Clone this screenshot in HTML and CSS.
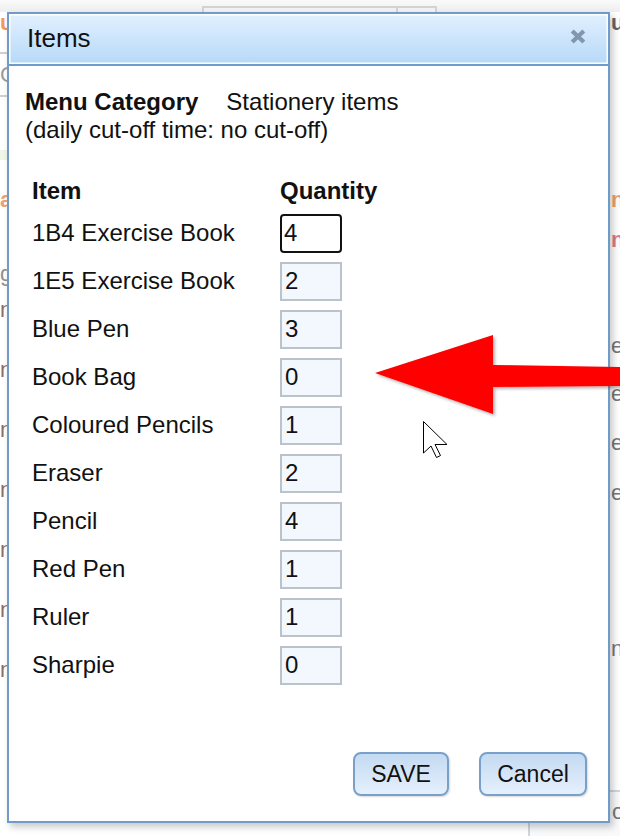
FILE: index.html
```html
<!DOCTYPE html>
<html>
<head>
<meta charset="utf-8">
<link rel="stylesheet" href="styles.css">
</head>
<body>
<div class="page">
  <div class="bg-top"><div class="bg-topbox"><div class="bg-topdiv"></div></div></div>
  <div class="bg">
    <div class="bg-left">
      <div class="f f-u">u</div>
      <div class="f-box">C</div>
      <div class="f-green"></div>
      <div class="f f-a">a</div>
      <div class="f f-g">g</div>
      <div class="f f-n first">n</div>
      <div class="f f-n">n</div>
      <div class="f f-n">n</div>
      <div class="f f-n">n</div>
      <div class="f f-n">n</div>
      <div class="f f-n">n</div>
      <div class="f f-n">n</div>
    </div>
    <div class="bg-right">
      <div class="f r-u">u</div>
      <div class="f r-on">n</div>
      <div class="f r-pn">n</div>
      <div class="f r-e1">e</div>
      <div class="f r-e2">e</div>
      <div class="f r-er">er</div>
      <div class="f r-ec">ec</div>
      <div class="f r-n">n</div>
      <div class="r-box">o</div>
    </div>
  </div>

  <div class="dialog">
    <div class="titlebar">
      <span class="title">Items</span>
      <svg class="close" width="16" height="15" viewBox="0 0 16 15"><path d="M2.2 2 L13.8 13 M13.8 2 L2.2 13" stroke="#8297ac" stroke-width="4.2" stroke-linecap="butt"/></svg>
    </div>
    <div class="content">
      <div class="info"><b>Menu Category</b><span class="cat">Stationery items</span></div>
      <div class="info">(daily cut-off time: no cut-off)</div>
      <div class="table">
        <div class="th">Item</div><div class="th">Quantity</div>
        <div class="td">1B4 Exercise Book</div><div class="td"><input class="qty focused" type="text" value="4"></div>
        <div class="td">1E5 Exercise Book</div><div class="td"><input class="qty" type="text" value="2"></div>
        <div class="td">Blue Pen</div><div class="td"><input class="qty" type="text" value="3"></div>
        <div class="td">Book Bag</div><div class="td"><input class="qty" type="text" value="0"></div>
        <div class="td">Coloured Pencils</div><div class="td"><input class="qty" type="text" value="1"></div>
        <div class="td">Eraser</div><div class="td"><input class="qty" type="text" value="2"></div>
        <div class="td">Pencil</div><div class="td"><input class="qty" type="text" value="4"></div>
        <div class="td">Red Pen</div><div class="td"><input class="qty" type="text" value="1"></div>
        <div class="td">Ruler</div><div class="td"><input class="qty" type="text" value="1"></div>
        <div class="td">Sharpie</div><div class="td"><input class="qty" type="text" value="0"></div>
      </div>
    </div>
    <div class="footer">
      <button class="btn btn-save">SAVE</button>
      <button class="btn btn-cancel">Cancel</button>
    </div>
  </div>

  <svg class="annot" width="620" height="836" viewBox="0 0 620 836">
    <defs>
      <filter id="sh" x="-10%" y="-10%" width="130%" height="140%">
        <feDropShadow dx="2" dy="2" stdDeviation="1.5" flood-color="#000" flood-opacity="0.3"/>
      </filter>
    </defs>
    <polygon points="375,373 493,335 493,365 620,367 620,386 493,387 493,414" fill="#ff0000" filter="url(#sh)"/>
    <polygon points="423.5,421.5 423.5,453 431,446 436.5,457.5 440.5,455.5 435,444.5 447,444.5" fill="#fff" stroke="#000" stroke-width="1" stroke-linejoin="miter"/>
  </svg>
</div>
</body>
</html>
```

FILE: styles.css
```css
html, body {
  margin: 0;
  padding: 0;
  background: #fff;
}
.page {
  position: relative;
  width: 620px;
  height: 836px;
  overflow: hidden;
  background: #fff;
  font-family: "Liberation Sans", Arial, sans-serif;
}
.bg-top {
  height: 12px;
  background: linear-gradient(#fafafa, #eeeeee);
  display: flex;
  align-items: flex-end;
}
.bg-topbox {
  margin-left: 202px;
  width: 235px;
  height: 6px;
  box-sizing: border-box;
  border: 2px solid #d3d3d3;
  border-bottom: none;
  background: #f2f2f2;
  display: flex;
  justify-content: flex-end;
}
.bg-topdiv {
  width: 37px;
  border-left: 2px solid #d3d3d3;
}
.bg {
  display: flex;
  justify-content: space-between;
}
.bg-left {
  width: 40px;
  display: flex;
  flex-direction: column;
}
.bg-right {
  width: 9px;
  display: flex;
  flex-direction: column;
}
.f {
  font-size: 22px;
  line-height: 24px;
  height: 24px;
  white-space: nowrap;
}
.f-u { margin-top: -1px; color: #f29a5c; font-weight: bold; }
.f-box {
  margin-top: 17px;
  height: 45px;
  box-sizing: border-box;
  border: 2px solid #d0d0d0;
  border-left: none;
  font-size: 22px;
  line-height: 41px;
  color: #9a9a9a;
}
.f-green { margin-top: 53px; height: 10px; background: #f1f7e8; }
.f-a { margin-top: 28px; color: #f0a070; font-weight: bold; }
.f-g { margin-top: 50px; color: #909090; }
.f-n { margin-top: 36px; color: #8e6e66; }
.f-n.first { margin-top: 12px; }

.r-u { margin-top: -1px; color: #666; font-weight: bold; }
.r-on { margin-top: 153px; color: #f0a070; font-weight: bold; }
.r-pn { margin-top: 16px; color: #e07a86; font-weight: bold; }
.r-e1 { margin-top: 82px; color: #777; }
.r-e2 { margin-top: 24px; color: #777; }
.r-er { margin-top: 25px; color: #777; }
.r-ec { margin-top: 26px; color: #777; }
.r-n { margin-top: 132px; color: #777; }
.r-box {
  margin-top: 129px;
  margin-left: -83px;
  width: 110px;
  height: 60px;
  flex: none;
  box-sizing: border-box;
  border: 2px solid #cfd6de;
  border-radius: 6px;
  background: #f7f9fb;
  padding-left: 82px;
  font-size: 22px;
  line-height: 40px;
  color: #777;
}

/* dialog */
.dialog {
  position: absolute;
  left: 7px;
  top: 12px;
  width: 603px;
  height: 811px;
  box-sizing: border-box;
  border: 2px solid #6f9bc9;
  background: #fff;
  box-shadow: 3px 4px 7px rgba(0, 0, 0, 0.22);
  display: flex;
  flex-direction: column;
  color: #111;
}
.titlebar {
  height: 52px;
  flex: none;
  box-sizing: border-box;
  border-bottom: 2px solid #6f9bc9;
  box-shadow: inset 0 0 0 1.5px #fff;
  background: linear-gradient(#e2f0fe, #b6d9f8);
  display: flex;
  align-items: center;
  justify-content: space-between;
  padding: 0 22px 0 18px;
}
.title {
  font-size: 26px;
  line-height: 50px;
  margin-top: -2px;
}
.close {
  margin-bottom: 6px;
}
.content {
  padding: 22px 16px 0 16px;
  font-size: 24px;
}
.info {
  line-height: 28px;
}
.info b {
  font-weight: bold;
}
.cat {
  margin-left: 28px;
}
.table {
  margin-top: 33px;
  margin-left: 7px;
  display: grid;
  grid-template-columns: 248px 1fr;
  grid-auto-rows: 48px;
  grid-template-rows: 32px;
}
.th {
  font-weight: bold;
  line-height: 28px;
}
.td {
  display: flex;
  align-items: center;
}
.qty {
  width: 62px;
  height: 39px;
  box-sizing: border-box;
  border: 2px solid #bac2cc;
  background: #f3f8fe;
  padding: 0 3px;
  margin: 0;
  font-family: "Liberation Sans", Arial, sans-serif;
  font-size: 24px;
  color: #111;
  outline: none;
  border-radius: 0;
}
.qty.focused {
  border-color: #111;
  border-radius: 4px;
  background: #fff;
  padding-left: 2px;
}
.footer {
  margin-top: auto;
  display: flex;
  justify-content: flex-end;
  gap: 30px;
  padding: 0 21px 25px 0;
}
.btn {
  height: 44px;
  box-sizing: border-box;
  border: 2px solid #79a0c9;
  border-radius: 8px;
  background: linear-gradient(#c3daf2, #e5f0fc);
  box-shadow: 1px 1px 2px rgba(0, 0, 0, 0.15);
  font-family: "Liberation Sans", Arial, sans-serif;
  font-size: 23px;
  color: #111;
  padding: 0;
}
.btn-save { width: 96px; }
.btn-cancel { width: 108px; }

.annot {
  position: absolute;
  left: 0;
  top: 0;
  pointer-events: none;
}
```
